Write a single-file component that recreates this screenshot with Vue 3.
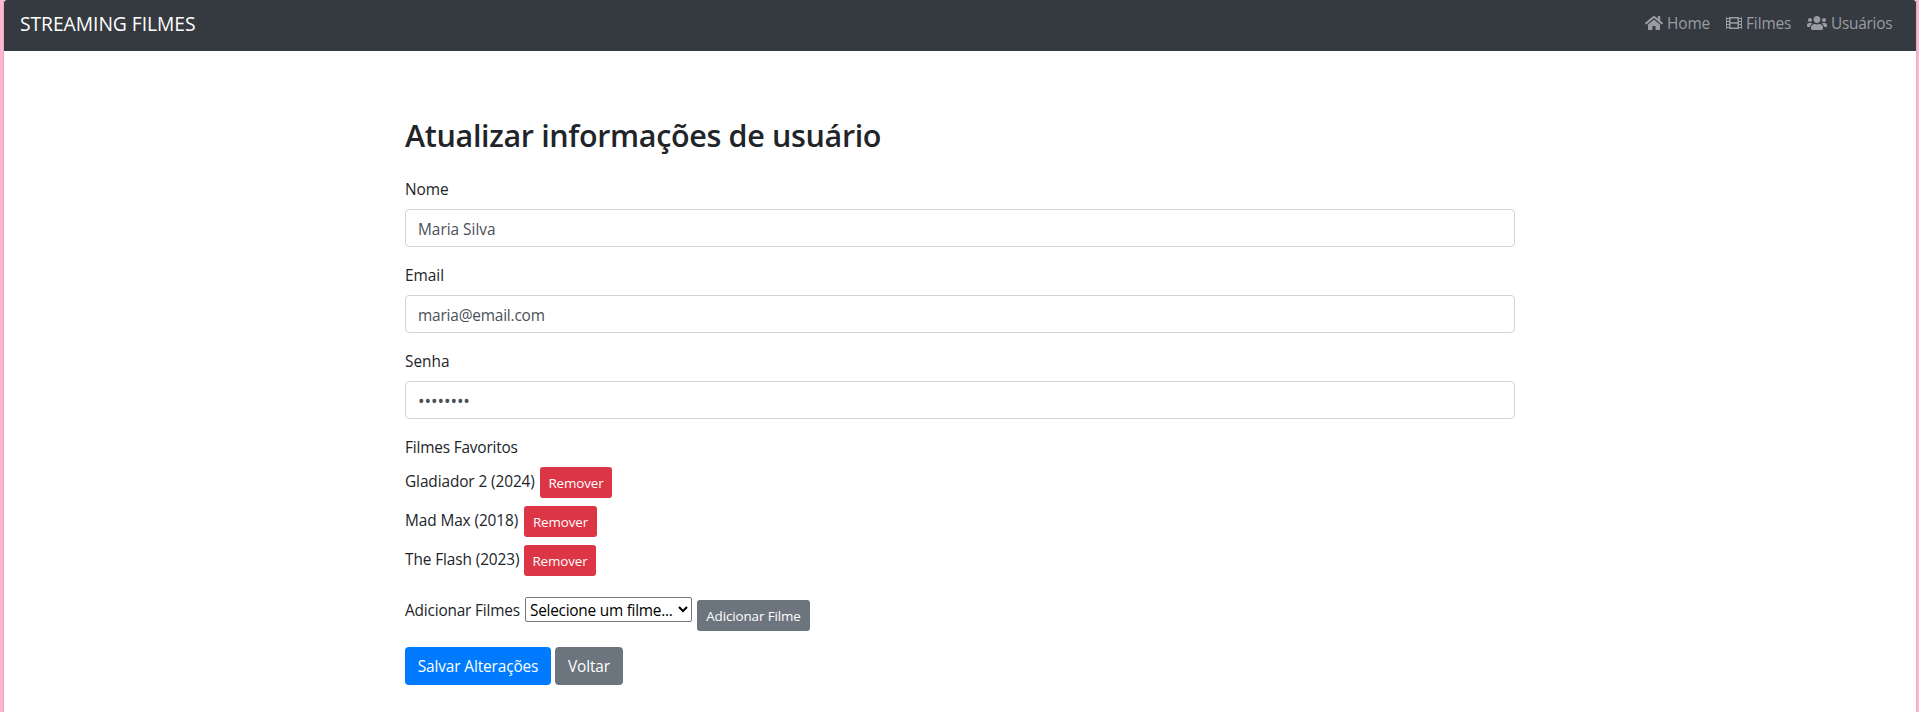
<script setup>
import { ref } from 'vue'

const nome = ref('Maria Silva')
const email = ref('maria@email.com')
const senha = ref('12345678')
const favoritos = ref([
  { titulo: 'Gladiador 2 (2024)', classe: 'gladiador' },
  { titulo: 'Mad Max (2018)', classe: 'mad-max' },
  { titulo: 'The Flash (2023)', classe: 'flash' }
])
</script>

<template>
  <div class="page">
    <nav class="navbar">
      <a class="brand">STREAMING FILMES</a>
      <div class="links">
        <a class="link home">
          <svg width="18" height="16" viewBox="0 0 576 512" fill="currentColor"><path d="M280.37 148.26L96 300.11V464a16 16 0 0 0 16 16l112.06-.29a16 16 0 0 0 15.92-16V368a16 16 0 0 1 16-16h64a16 16 0 0 1 16 16v95.64a16 16 0 0 0 16 16.05L464 480a16 16 0 0 0 16-16V300L295.67 148.26a12.19 12.19 0 0 0-15.3 0zM571.6 251.47L488 182.56V44.05a12 12 0 0 0-12-12h-56a12 12 0 0 0-12 12v72.61L318.47 43a48 48 0 0 0-61 0L4.34 251.47a12 12 0 0 0-1.6 16.9l25.5 31A12 12 0 0 0 45.15 301l235.22-193.74a12.19 12.19 0 0 1 15.3 0L530.9 301a12 12 0 0 0 16.9-1.6l25.5-31a12 12 0 0 0-1.7-16.93z" /></svg>
          <span>Home</span>
        </a>
        <a class="link filmes">
          <svg width="16" height="16" viewBox="0 0 512 512" fill="currentColor"><path d="M488 64h-8v20c0 6.600-5.400 12-12 12h-40c-6.600 0-12-5.400-12-12V64H96v20c0 6.600-5.400 12-12 12H44c-6.600 0-12-5.400-12-12V64h-8C10.700 64 0 74.700 0 88v336c0 13.300 10.700 24 24 24h8v-20c0-6.600 5.400-12 12-12h40c6.600 0 12 5.400 12 12v20h320v-20c0-6.600 5.400-12 12-12h40c6.600 0 12 5.400 12 12v20h8c13.300 0 24-10.700 24-24V88c0-13.300-10.700-24-24-24zM96 372c0 6.600-5.400 12-12 12H44c-6.600 0-12-5.400-12-12v-40c0-6.600 5.400-12 12-12h40c6.600 0 12 5.400 12 12v40zm0-96c0 6.600-5.400 12-12 12H44c-6.600 0-12-5.400-12-12v-40c0-6.600 5.400-12 12-12h40c6.600 0 12 5.400 12 12v40zm0-96c0 6.600-5.400 12-12 12H44c-6.600 0-12-5.400-12-12v-40c0-6.600 5.400-12 12-12h40c6.600 0 12 5.400 12 12v40zm272 208c0 6.600-5.400 12-12 12H156c-6.600 0-12-5.400-12-12v-96c0-6.600 5.400-12 12-12h200c6.600 0 12 5.400 12 12v96zm0-168c0 6.600-5.400 12-12 12H156c-6.600 0-12-5.400-12-12v-96c0-6.600 5.400-12 12-12h200c6.600 0 12 5.400 12 12v96zm112 152c0 6.600-5.400 12-12 12h-40c-6.600 0-12-5.400-12-12v-40c0-6.600 5.400-12 12-12h40c6.600 0 12 5.400 12 12v40zm0-96c0 6.600-5.400 12-12 12h-40c-6.600 0-12-5.400-12-12v-40c0-6.600 5.400-12 12-12h40c6.600 0 12 5.400 12 12v40zm0-96c0 6.600-5.400 12-12 12h-40c-6.600 0-12-5.400-12-12v-40c0-6.600 5.400-12 12-12h40c6.600 0 12 5.400 12 12v40z" /></svg>
          <span>Filmes</span>
        </a>
        <a class="link usuarios">
          <svg width="20" height="16" viewBox="0 0 640 512" fill="currentColor"><path d="M96 224c35.300 0 64-28.700 64-64s-28.700-64-64-64-64 28.700-64 64 28.700 64 64 64zm448 0c35.300 0 64-28.700 64-64s-28.700-64-64-64-64 28.700-64 64 28.700 64 64 64zm32 32h-64c-17.600 0-33.500 7.100-45.100 18.600 40.300 22.100 68.900 62 75.100 109.400h66c17.700 0 32-14.300 32-32v-32c0-35.300-28.700-64-64-64zm-256 0c61.900 0 112-50.100 112-112S381.900 32 320 32 208 82.100 208 144s50.100 112 112 112zm76.800 32h-8.300c-20.800 10-43.900 16-68.500 16s-47.600-6-68.500-16h-8.300C179.600 288 128 339.600 128 403.200V432c0 26.500 21.500 48 48 48h288c26.500 0 48-21.500 48-48v-28.800c0-63.600-51.600-115.200-115.200-115.200zm-223.700-13.400C161.500 263.100 145.600 256 128 256H64c-35.300 0-64 28.700-64 64v32c0 17.700 14.300 32 32 32h65.900c6.300-47.400 34.900-87.300 75.200-109.400z" /></svg>
          <span>Usuários</span>
        </a>
      </div>
    </nav>

    <form class="content" @submit.prevent>
      <h2>Atualizar informações de usuário</h2>
      <div class="group">
        <label for="nome">Nome</label>
        <input id="nome" v-model="nome" type="text" />
      </div>
      <div class="group">
        <label for="email">Email</label>
        <input id="email" v-model="email" class="i-email" type="text" />
      </div>
      <div class="group">
        <label for="senha">Senha</label>
        <input id="senha" v-model="senha" class="i-senha" type="password" />
      </div>
      <label class="l-fav">Filmes Favoritos</label>
      <ul>
        <li v-for="f in favoritos" :key="f.titulo" :class="f.classe">
          <span class="titulo">{{ f.titulo }}</span>
          <button class="btn small danger" type="button">Remover</button>
        </li>
      </ul>
      <div class="add">
        <label for="filme">Adicionar Filmes</label>
        <select id="filme"><option>Selecione um filme...</option></select>
        <button class="btn small secondary" type="button">Adicionar Filme</button>
      </div>
      <div class="actions">
        <button class="btn primary" type="submit">Salvar Alterações</button>
        <button class="btn secondary" type="button">Voltar</button>
      </div>
    </form>
  </div>
</template>

<style>
body {
  margin: 0;
  background: #fff;
  overflow: hidden;
}
</style>

<style scoped>
* {
  box-sizing: border-box;
}
.page {
  height: 712px;
  padding: 0 3px 0 4px;
  background: linear-gradient(90deg, #ffb6cf 0 3px, #eaa9c0 3px 4px, #fff 4px 1916px, #eaa9c0 1916px 1917px, #ffb6cf 1917px);
  color: #212529;
  font-family: "Open Sans", "Noto Sans", sans-serif;
  font-size: 15.4px;
  line-height: 24px;
}
.navbar {
  display: flex;
  justify-content: space-between;
  height: 51px;
  padding: 8px 24px 0 16px;
  border-radius: 3px 3px 0 0;
  background: #343a40;
}
.brand {
  color: #fff;
  font-size: 19.3px;
  line-height: 32px;
  letter-spacing: -0.05px;
}
.links {
  display: flex;
  gap: 16px;
  padding-top: 4px;
}
.link {
  display: flex;
  gap: 4px;
  color: #9a9da0;
}
.link svg {
  margin-top: 3px;
}
.link span {
  white-space: nowrap;
  letter-spacing: -0.1px;
}
.home span {
  width: 43px;
}
.filmes span {
  width: 45px;
}
.usuarios span {
  width: 61px;
  letter-spacing: -0.25px;
}
.content {
  width: 1110px;
  margin-left: 401px;
  padding-top: 65px;
}
h2 {
  margin: 0 0 24px;
  font-size: 30.5px;
  line-height: 38px;
  font-weight: 600;
  letter-spacing: -0.35px;
}
.group {
  height: 86px;
}
label {
  display: block;
}
.group input {
  display: block;
  width: 100%;
  height: 38px;
  margin: 7px 0 0;
  padding: 7px 12px 5px;
  border: 1px solid #ced4da;
  border-radius: 4px;
  outline: none;
  background: #fff;
  color: #495057;
  font: inherit;
}
.group .i-email {
  letter-spacing: -0.18px;
}
.group .i-senha {
  font-size: 17.5px;
  letter-spacing: -0.1px;
}
.l-fav {
  letter-spacing: -0.18px;
}
ul {
  margin: 7px 0 0;
  padding: 0;
  list-style: none;
}
li {
  display: flex;
  height: 39px;
}
.titulo {
  width: 119px;
  padding-top: 3px;
  white-space: nowrap;
  letter-spacing: -0.1px;
}
.gladiador .titulo {
  width: 135px;
}
.btn {
  height: 38px;
  padding: 1px 0 0;
  border: 0;
  border-radius: 4px;
  color: #fff;
  font: inherit;
  letter-spacing: -0.12px;
  text-align: center;
  white-space: nowrap;
}
.small {
  width: 72px;
  height: 31px;
  padding: 0;
  border-radius: 3px;
  font-size: 13.4px;
  letter-spacing: -0.1px;
}
.mad-max .small {
  width: 73px;
}
.danger {
  background: #dc3545;
}
.secondary {
  background: #6c757d;
}
.primary {
  background: #007bff;
}
.add {
  display: flex;
  height: 50px;
  margin-top: 13px;
}
.add label {
  width: 120px;
  padding-top: 2px;
  white-space: nowrap;
  letter-spacing: -0.18px;
}
select {
  width: 167px;
  height: 25px;
  margin: 0 5px 0 0;
  padding: 1px 0 0;
  border: 1px solid #767676;
  border-radius: 2px;
  background-color: #fff;
  color: #000;
  font: inherit;
  letter-spacing: -0.25px;
}
.add .small {
  width: 113px;
  margin-top: 3px;
}
.actions {
  display: flex;
  gap: 4px;
}
.actions .primary {
  width: 146px;
}
.actions .secondary {
  width: 68px;
}
</style>
